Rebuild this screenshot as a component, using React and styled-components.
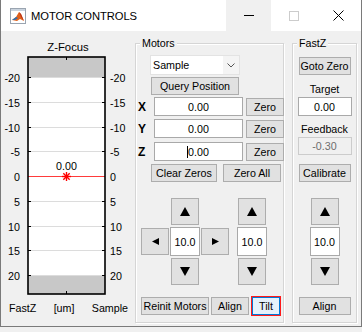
import React from "react";
import styled, { createGlobalStyle } from "styled-components";

const Global = createGlobalStyle`
  html, body { margin: 0; padding: 0; background: #f0f0f0; }
  body { font-family: "Liberation Sans", Arial, sans-serif; }
  * { box-sizing: border-box; }
`;

const FONT = `"Liberation Sans", Arial, sans-serif`;

const Window = styled.div`
  width: 362px;
  height: 327px;
  border: 1px solid #7a7a7a;
  border-top: none;
  background: #f0f0f0;
  display: flex;
  flex-direction: column;
  font-family: ${FONT};
  color: #000;
`;

const TitleBar = styled.div`
  height: 31px;
  background: #fff;
  display: flex;
  align-items: stretch;
  flex-shrink: 0;
`;

const TitleIcon = styled.div`
  width: 30px;
  display: flex;
  align-items: center;
  justify-content: flex-end;
  padding-right: 5px;
`;

const TitleText = styled.div`
  flex: 1;
  display: flex;
  align-items: center;
  font-size: 11.2px;
  letter-spacing: -0.05px;
`;

const CapBtn = styled.div`
  width: 45px;
  display: flex;
  align-items: center;
  justify-content: center;
  background: ${(p) => (p.$hover ? "#f0f0f0" : "transparent")};
`;

const Content = styled.div`
  flex: 1;
  display: flex;
  align-items: flex-start;
`;

const ZPanel = styled.div`
  width: 134px;
  display: flex;
  flex-direction: column;
`;

const PanelTitle = styled.div`
  margin-top: 9px;
  height: 14px;
  line-height: 14px;
  text-align: center;
  font-size: 11.3px;
`;

const AxisLabels = styled.div`
  height: 14px;
  line-height: 14px;
  display: flex;
  justify-content: space-between;
  padding: 0 7px 0 8px;
  font-size: 10.7px;
`;

const Group = styled.div`
  position: relative;
  margin-top: 12px;
  margin-left: ${(p) => p.$ml || 0}px;
  width: ${(p) => p.$w}px;
  height: 280px;
  border: 1px solid #d5d5d5;
  box-shadow: inset 1px 1px 0 #fff, 1px 1px 0 #fff;
  display: flex;
  flex-direction: column;
  align-items: ${(p) => (p.$center ? "center" : "flex-start")};
`;

const Legend = styled.div`
  position: absolute;
  top: -7px;
  left: 4px;
  padding: 0 2px;
  background: #f0f0f0;
  font-size: 10.7px;
  line-height: 13px;
`;

const Btn = styled.div`
  width: ${(p) => p.$w}px;
  height: ${(p) => p.$h || 18}px;
  margin-top: ${(p) => p.$mt || 0}px;
  margin-left: ${(p) => p.$ml || 0}px;
  background: ${(p) => (p.$focus ? "#e5f1fb" : "#e1e1e1")};
  border: 1px solid ${(p) => (p.$focus ? "#0078d7" : "#adadad")};
  outline: ${(p) => (p.$focus ? "1px solid #ff1a1a" : "none")};
  outline-offset: 0;
  font-size: 10.7px;
  display: flex;
  align-items: center;
  justify-content: center;
  flex-shrink: 0;
`;

const Field = styled.div`
  position: relative;
  width: ${(p) => p.$w}px;
  height: ${(p) => p.$h || 19}px;
  margin-top: ${(p) => p.$mt || 0}px;
  background: ${(p) => (p.$disabled ? "#f0f0f0" : "#fff")};
  border: 1px solid ${(p) => (p.$disabled ? "#cccccc" : "#a9a9a9")};
  color: ${(p) => (p.$disabled ? "#6d6d6d" : "#000")};
  font-size: 10.7px;
  display: flex;
  align-items: center;
  justify-content: center;
  flex-shrink: 0;
`;

const Caret = styled.span`
  position: absolute;
  left: 32px;
  top: 3px;
  width: 1px;
  height: 12px;
  background: #000;
`;

const Label = styled.div`
  margin-top: ${(p) => p.$mt || 0}px;
  height: 14px;
  line-height: 14px;
  font-size: 10.7px;
  color: ${(p) => p.$color || "#000"};
`;

const Select = styled.div`
  margin-top: 11px;
  margin-left: 14px;
  width: 90px;
  height: 20px;
  background: #fff;
  border: 1px solid #e3e3e3;
  display: flex;
  align-items: stretch;
  font-size: 10.7px;
`;

const SelectText = styled.div`
  flex: 1;
  display: flex;
  align-items: center;
  padding-left: 2px;
`;

const SelectArrow = styled.div`
  width: 16px;
  display: flex;
  align-items: center;
  justify-content: center;
  background: #f4f4f4;
`;

const AxisRow = styled.div`
  margin-top: ${(p) => p.$mt}px;
  display: grid;
  grid-template-columns: 15px 89px 38px;
  column-gap: 3px;
  align-items: center;
`;

const AxisName = styled.div`
  font-weight: bold;
  font-size: 12px;
  padding-left: 2px;
`;

const BtnRow = styled.div`
  margin-top: ${(p) => p.$mt}px;
  margin-left: ${(p) => p.$ml}px;
  display: flex;
  gap: ${(p) => p.$gap}px;
`;

const JogArea = styled.div`
  margin-top: 16px;
  margin-left: 5px;
  display: flex;
  gap: 8px;
`;

const JogGrid = styled.div`
  display: grid;
  grid-template-columns: 28px 30px 28px;
  grid-template-rows: 27px 29px 27px;
  column-gap: 1px;
  row-gap: 2px;
  align-items: center;
  justify-items: center;
`;

const JogCol = styled.div`
  display: flex;
  flex-direction: column;
  align-items: center;
  gap: 2px;
`;

const Tri = ({ dir }) => {
  const pts = {
    up: "0,9 5,0 10,9",
    down: "0,0 10,0 5,9",
    left: "7,0 7,7 0,3.5",
    right: "0,0 0,7 7,3.5",
  }[dir];
  const big = dir === "up" || dir === "down";
  return (
    <svg width={big ? 10 : 7} height={big ? 9 : 7} viewBox={big ? "0 0 10 9" : "0 0 7 7"}>
      <polygon points={pts} fill="#000" />
    </svg>
  );
};

const ArrowBtn = ({ dir, style }) => (
  <Btn $w={28} $h={27} style={style}>
    <Tri dir={dir} />
  </Btn>
);

const ZPlot = () => {
  const y0 = 122;
  const k = 4.95;
  const vals = [-20, -15, -10, -5, 0, 5, 10, 15, 20];
  const L = 27;
  const R = 104;
  return (
    <svg width="134" height="247" viewBox="0 0 134 247" style={{ display: "block" }}>
      <rect x={L} y={3} width={R - L} height={237} fill="#fff" />
      <rect x={L} y={3} width={R - L} height={y0 - 20 * k - 3} fill="#c8c8c8" />
      <rect x={L} y={y0 + 20 * k} width={R - L} height={240 - (y0 + 20 * k)} fill="#c8c8c8" />
      {vals.map((v) => {
        const y = Math.round(y0 + v * k) + 0.5;
        return (
          <g key={v}>
            {v !== 0 && <line x1={L} x2={R} y1={y} y2={y} stroke="#dcdcdc" strokeWidth="1" />}
            <line x1={L} x2={L + 3} y1={y} y2={y} stroke="#000" strokeWidth="1" />
            <line x1={R - 3} x2={R} y1={y} y2={y} stroke="#000" strokeWidth="1" />
            <text x={19} y={y} fontSize="10.7" textAnchor="end" dominantBaseline="central" fontFamily={FONT}>
              {v}
            </text>
            <text x={109} y={y} fontSize="10.7" textAnchor="start" dominantBaseline="central" fontFamily={FONT}>
              {v}
            </text>
          </g>
        );
      })}
      <line x1={L} x2={R} y1={122.5} y2={122.5} stroke="#ff3b3b" strokeWidth="1" />
      <line x1={65.5} x2={65.5} y1={3} y2={6} stroke="#000" strokeWidth="1" />
      <line x1={65.5} x2={65.5} y1={237} y2={240} stroke="#000" strokeWidth="1" />
      <rect x={L} y={3} width={R - L} height={237} fill="none" stroke="#000" strokeWidth="1.6" />
      <text x={65.5} y={111.5} fontSize="10.7" textAnchor="middle" dominantBaseline="central" fontFamily={FONT}>
        0.00
      </text>
      <g stroke="#ff0000" strokeWidth="1.4">
        <line x1={61} x2={70} y1={122.5} y2={122.5} />
        <line x1={65.5} x2={65.5} y1={118} y2={127} />
        <line x1={62.3} x2={68.7} y1={119.3} y2={125.7} />
        <line x1={62.3} x2={68.7} y1={125.7} y2={119.3} />
      </g>
    </svg>
  );
};

const MatlabIcon = () => (
  <svg width="16" height="16" viewBox="0 0 16 16">
    <rect x="0.5" y="0.5" width="15" height="15" fill="#fff" stroke="#9aa4b0" />
    <rect x="1" y="1" width="14" height="2" fill="#c9d3de" />
    <polygon points="2,12 6,9 9,4 11,6 14,13 10,11 7,13" fill="#e0601a" />
    <polygon points="2,12 6,9 8,10 5,12" fill="#2d6fb0" />
    <polygon points="9,4 11,6 14,13 11,9" fill="#b8321a" />
  </svg>
);

export default function App() {
  return (
    <>
      <Global />
      <Window>
        <TitleBar>
          <TitleIcon>
            <MatlabIcon />
          </TitleIcon>
          <TitleText>MOTOR CONTROLS</TitleText>
          <CapBtn $hover>
            <svg width="10" height="1">
              <rect width="10" height="1" fill="#000" />
            </svg>
          </CapBtn>
          <CapBtn>
            <svg width="10" height="10">
              <rect x="0.5" y="0.5" width="9" height="9" fill="none" stroke="#cccccc" />
            </svg>
          </CapBtn>
          <CapBtn>
            <svg width="11" height="11">
              <path d="M0.5 0.5 L10.5 10.5 M10.5 0.5 L0.5 10.5" stroke="#000" strokeWidth="1" />
            </svg>
          </CapBtn>
        </TitleBar>
        <Content>
          <ZPanel>
            <PanelTitle>Z-Focus</PanelTitle>
            <ZPlot />
            <AxisLabels>
              <span>FastZ</span>
              <span>[um]</span>
              <span>Sample</span>
            </AxisLabels>
          </ZPanel>

          <Group $w={149}>
            <Legend>Motors</Legend>
            <Select>
              <SelectText>Sample</SelectText>
              <SelectArrow>
                <svg width="8" height="5" viewBox="0 0 8 5">
                  <path d="M0.5 0.5 L4 4 L7.5 0.5" fill="none" stroke="#555" strokeWidth="1" />
                </svg>
              </SelectArrow>
            </Select>
            <Btn $w={88} $mt={2} $ml={15}>Query Position</Btn>
            {[
              ["X", 2],
              ["Y", 3],
              ["Z", 4],
            ].map(([a, mt]) => (
              <AxisRow key={a} $mt={mt}>
                <AxisName>{a}</AxisName>
                <Field $w={89}>
                  {a === "Z" && <Caret />}
                  0.00
                </Field>
                <Btn $w={38} $h={18}>Zero</Btn>
              </AxisRow>
            ))}
            <BtnRow $mt={3} $ml={15} $gap={6}>
              <Btn $w={66} $h={18}>Clear Zeros</Btn>
              <Btn $w={58} $h={18}>Zero All</Btn>
            </BtnRow>
            <JogArea>
              <JogGrid>
                <span />
                <ArrowBtn dir="up" />
                <span />
                <ArrowBtn dir="left" />
                <Field $w={30} $h={29}>10.0</Field>
                <ArrowBtn dir="right" />
                <span />
                <ArrowBtn dir="down" />
                <span />
              </JogGrid>
              <JogCol>
                <ArrowBtn dir="up" />
                <Field $w={30} $h={29}>10.0</Field>
                <ArrowBtn dir="down" />
              </JogCol>
            </JogArea>
            <BtnRow $mt={12} $ml={5} $gap={2}>
              <Btn $w={68} $h={18}>Reinit Motors</Btn>
              <Btn $w={38} $h={18}>Align</Btn>
              <Btn $w={28} $h={18} $focus style={{ marginLeft: 1 }}>Tilt</Btn>
            </BtnRow>
          </Group>

          <Group $w={65} $ml={8} $center>
            <Legend>FastZ</Legend>
            <Btn $w={52} $mt={13}>Goto Zero</Btn>
            <Label $mt={7}>Target</Label>
            <Field $w={54} $mt={1}>0.00</Field>
            <Label $mt={6}>Feedback</Label>
            <Field $w={54} $h={18} $mt={1} $disabled>-0.30</Field>
            <Btn $w={52} $mt={9}>Calibrate</Btn>
            <JogCol style={{ marginTop: 16 }}>
              <ArrowBtn dir="up" />
              <Field $w={30} $h={29}>10.0</Field>
              <ArrowBtn dir="down" />
            </JogCol>
            <Btn $w={52} $mt={12}>Align</Btn>
          </Group>
        </Content>
      </Window>
    </>
  );
}
